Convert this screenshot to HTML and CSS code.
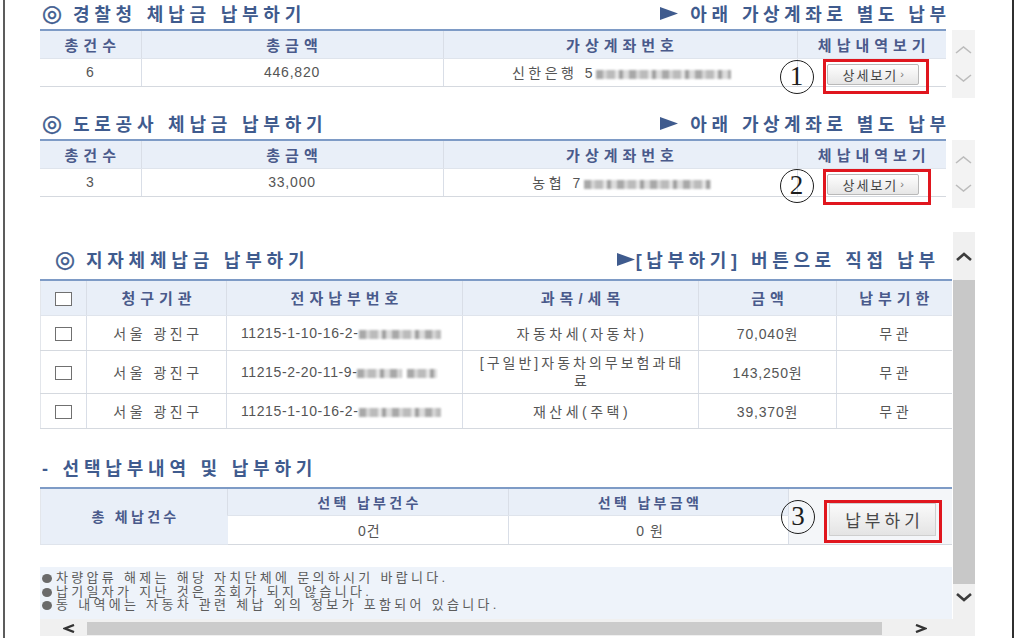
FILE: index.html
```html
<!DOCTYPE html>
<html lang="ko">
<head>
<meta charset="utf-8">
<title>체납금 납부하기</title>
<link rel="stylesheet" href="styles.css">
</head>
<body>
<div class="frame">

  <section class="sec">
    <div class="sec-head">
      <h2 class="title"><span class="bull">◎</span> 경찰청 체납금 납부하기</h2>
      <p class="lead"><svg class="tri" viewBox="0 0 18 13"><polygon points="0,0 18,6.5 0,13"/></svg>아래 가상계좌로 별도 납부</p>
    </div>
    <div class="sec-body">
      <table class="tbl">
        <colgroup><col class="w101"><col class="w302"><col class="w354"><col class="w149"></colgroup>
        <tr class="hrow"><th>총건수</th><th>총금액</th><th>가상계좌번호</th><th>체납내역보기</th></tr>
        <tr class="drow">
          <td class="nm">6</td>
          <td class="nm">446,820</td>
          <td class="kr">신한은행 5<span class="blur blur-a"></span></td>
          <td class="act"><span class="circ circ-a">1</span><button class="btn-detail">상세보기 <span class="gt">›</span></button><span class="mark mark-a"></span></td>
        </tr>
      </table>
      <div class="mini">
        <svg class="chev" viewBox="0 0 17 8"><polyline points="1,7 8.5,1 16,7"/></svg>
        <svg class="chev" viewBox="0 0 17 8"><polyline points="1,1 8.5,7 16,1"/></svg>
      </div>
    </div>
  </section>

  <section class="sec">
    <div class="sec-head">
      <h2 class="title"><span class="bull">◎</span> 도로공사 체납금 납부하기</h2>
      <p class="lead"><svg class="tri" viewBox="0 0 18 13"><polygon points="0,0 18,6.5 0,13"/></svg>아래 가상계좌로 별도 납부</p>
    </div>
    <div class="sec-body">
      <table class="tbl">
        <colgroup><col class="w101"><col class="w302"><col class="w354"><col class="w149"></colgroup>
        <tr class="hrow"><th>총건수</th><th>총금액</th><th>가상계좌번호</th><th>체납내역보기</th></tr>
        <tr class="drow">
          <td class="nm">3</td>
          <td class="nm">33,000</td>
          <td class="kr">농협 7<span class="blur blur-b"></span></td>
          <td class="act"><span class="circ circ-b">2</span><button class="btn-detail">상세보기 <span class="gt">›</span></button><span class="mark mark-b"></span></td>
        </tr>
      </table>
      <div class="mini">
        <svg class="chev" viewBox="0 0 17 8"><polyline points="1,7 8.5,1 16,7"/></svg>
        <svg class="chev" viewBox="0 0 17 8"><polyline points="1,1 8.5,7 16,1"/></svg>
      </div>
    </div>
  </section>

  <div class="box">
    <div class="pane">
      <div class="head3">
        <h2 class="title"><span class="bull">◎</span> 지자체체납금 납부하기</h2>
        <p class="lead lead3"><svg class="tri tri-tight" viewBox="0 0 18 13"><polygon points="0,0 18,6.5 0,13"/></svg>[납부하기] 버튼으로 직접 납부</p>
      </div>
      <table class="tbl3">
        <colgroup><col class="w46"><col class="w140"><col class="w236"><col class="w236"><col class="w138"><col class="w115"></colgroup>
        <tr class="h3"><th><span class="chk"></span></th><th>청구기관</th><th>전자납부번호</th><th>과목/세목</th><th>금액</th><th>납부기한</th></tr>
        <tr class="r3"><td><span class="chk"></span></td><td class="kr">서울 광진구</td><td class="pay-no">11215-1-10-16-2-<span class="blur blur-c"></span></td><td class="kr">자동차세(자동차)</td><td class="nm">70,040원</td><td class="kr">무관</td></tr>
        <tr class="r3 tall"><td><span class="chk"></span></td><td class="kr">서울 광진구</td><td class="pay-no">11215-2-20-11-9-<span class="blur blur-d"></span><span class="blur blur-e"></span></td><td class="kr two">[구일반]자동차의무보험과태<br>료</td><td class="nm">143,250원</td><td class="kr">무관</td></tr>
        <tr class="r3"><td><span class="chk"></span></td><td class="kr">서울 광진구</td><td class="pay-no">11215-1-10-16-2-<span class="blur blur-c"></span></td><td class="kr">재산세(주택)</td><td class="nm">39,370원</td><td class="kr">무관</td></tr>
      </table>

      <h3 class="sub">- 선택납부내역 및 납부하기</h3>
      <table class="tbl3 sum">
        <colgroup><col class="w187"><col class="w281"><col class="w280"><col class="w163"></colgroup>
        <tr class="sh"><th rowspan="2">총 체납건수</th><th>선택 납부건수</th><th>선택 납부금액</th><td rowspan="2" class="act3"><span class="circ circ-c">3</span><button class="btn-pay">납부하기</button><span class="mark mark-c"></span></td></tr>
        <tr class="sd"><td class="kr">0건</td><td class="kr">0 원</td></tr>
      </table>

      <div class="notes">
        <p><span class="dot"></span>차량압류 해제는 해당 자치단체에 문의하시기 바랍니다.</p>
        <p><span class="dot"></span>납기일자가 지난 것은 조회가 되지 않습니다.</p>
        <p><span class="dot"></span>동 내역에는 자동차 관련 체납 외의 정보가 포함되어 있습니다.</p>
      </div>
    </div>

    <div class="vbar">
      <div class="vup"><svg class="chev-d" viewBox="0 0 18 9"><polyline points="2,8 9,2 16,8"/></svg></div>
      <div class="vthumb"></div>
      <div class="vdown"><svg class="chev-d" viewBox="0 0 18 9"><polyline points="2,1 9,7 16,1"/></svg></div>
    </div>

    <div class="hbar">
      <svg class="hchev" viewBox="0 0 12 9"><polyline points="11,1 2,4.5 11,8"/></svg>
      <div class="hthumb"></div>
      <svg class="hchev hchev-r" viewBox="0 0 12 9"><polyline points="1,1 10,4.5 1,8"/></svg>
    </div>
    <div class="corner"></div>
  </div>

</div>
</body>
</html>
```

FILE: styles.css
```css
* { box-sizing: border-box; }
html, body { margin: 0; padding: 0; background: #fff; }
body {
  font-family: "Liberation Sans", "Noto Sans CJK KR", sans-serif;
  font-size: 14px;
  color: #555;
  overflow: hidden;
}
p, h2, h3 { margin: 0; }

.frame {
  margin-left: 3px;
  width: 1011px;
  height: 638px;
  border-left: 2px solid #5c5c5c;
  border-right: 2px solid #2f2f2f;
  padding: 1px 0 0 35px;
  overflow: hidden;
}

.sec { width: 935px; }
.sec + .sec { margin-top: 13px; }
.sec-head {
  display: flex;
  justify-content: space-between;
  align-items: center;
  width: 906px;
  height: 24px;
  margin-bottom: 4px;
}
.title {
  display: flex;
  align-items: center;
  padding-left: 2px;
  font-size: 18px;
  font-weight: 700;
  color: #3f5b8e;
  letter-spacing: 4.8px;
  white-space: pre;
}
.bull {
  font-family: "DejaVu Sans", "Noto Sans CJK KR", sans-serif;
  font-weight: 700;
  font-size: 23px;
  line-height: 20px;
  letter-spacing: 0;
  -webkit-text-stroke: 0.5px #3f5b8e;
  margin-right: 1px;
}
.lead {
  display: flex;
  align-items: center;
  margin-right: -4.5px;
  font-size: 18px;
  font-weight: 700;
  color: #3f5b8e;
  letter-spacing: 4.5px;
  white-space: nowrap;
}
.lead3 { letter-spacing: 4.6px; margin-right: -4.6px; }
.tri { width: 18px; height: 13px; fill: #3f5b8e; margin-right: 12px; flex: none; }
.tri-tight { margin-right: 1px; }

.sec-body { display: flex; gap: 6px; align-items: flex-start; }

table { border-collapse: collapse; table-layout: fixed; }
.w101 { width: 101px; } .w302 { width: 302px; } .w354 { width: 354px; } .w149 { width: 149px; }
.w46 { width: 46px; } .w140 { width: 140px; } .w236 { width: 236px; } .w138 { width: 138px; } .w115 { width: 115px; }
.w187 { width: 187px; } .w281 { width: 281px; } .w280 { width: 280px; } .w163 { width: 163px; }

th {
  background: #e9eff8;
  color: #4a5a8b;
  font-weight: 700;
  font-size: 15px;
  letter-spacing: 5px;
  padding: 0 0 0 5px;
  text-align: center;
  border-left: 1px solid #d9dee7;
  border-bottom: 1px solid #dfe4ec;
}
td {
  padding: 0;
  text-align: center;
  vertical-align: middle;
  border-left: 1px solid #d9dee7;
  border-bottom: 1px solid #d5d9df;
  font-size: 14px;
  color: #555;
}
th:first-child, td:first-child { border-left: none; }
.kr { letter-spacing: 3.5px; padding-left: 3px; }
.nm { letter-spacing: 0.8px; }

.tbl { width: 906px; border-top: 2px solid #7e9bc6; }
.hrow { height: 28px; }
.drow { height: 28px; }

.act { position: relative; }
.act3 { position: relative; background: #f4f6f9; text-align: left; padding: 7px 0 0 40px; }

.btn-detail {
  display: inline-flex;
  align-items: center;
  justify-content: center;
  width: 92px;
  height: 21px;
  margin: 4px 0 0 3px;
  padding: 0 0 0 2px;
  border: 1px solid #b9b9b9;
  border-radius: 2px;
  background: linear-gradient(#fefefe, #e6e6e6);
  font-family: "Liberation Sans", "Noto Sans CJK KR", sans-serif;
  font-size: 13px;
  color: #444;
  letter-spacing: 2px;
}
.gt { font-size: 11px; color: #777; margin-left: 2px; }

.btn-pay {
  display: inline-flex;
  align-items: center;
  justify-content: center;
  width: 107px;
  height: 33px;
  padding: 0 0 0 4px;
  border: 1px solid #cfcfcf;
  background: linear-gradient(#fafafa, #e4e4e4);
  font-family: "Liberation Sans", "Noto Sans CJK KR", sans-serif;
  font-size: 17px;
  color: #474747;
  letter-spacing: 4px;
}

.circ {
  position: absolute;
  width: 34px;
  height: 34px;
  border: 1.6px solid #1e1e1e;
  border-radius: 50%;
  font: 400 27px/31px "Liberation Serif", serif;
  color: #1e1e1e;
  text-align: center;
  letter-spacing: 0;
}
.circ-a { left: -18px; top: 1px; }
.circ-b { left: -18px; top: 0; }
.circ-c { left: -8px; top: 11px; }

.mark { position: absolute; border: 3px solid #e0161e; }
.mark-a { left: 25px; top: 0; width: 106px; height: 35px; }
.mark-b { left: 25px; top: 0; width: 108px; height: 36px; }
.mark-c { left: 35px; top: 11px; width: 118px; height: 43px; }

.blur {
  display: inline-block;
  height: 9px;
  vertical-align: -1px;
  background: repeating-linear-gradient(90deg, #9a9a9a 0 7px, #cfcfcf 7px 11px, #b0b0b0 11px 19px, #e2e2e2 19px 23px, #8f8f8f 23px 27px, #d6d6d6 27px 33px);
  filter: blur(1.2px);
  opacity: 0.85;
}
.blur-a { width: 135px; }
.blur-b { width: 127px; }
.blur-c { width: 82px; }
.blur-d { width: 45px; margin-right: 5px; }
.blur-e { width: 30px; }

.mini {
  width: 23px;
  height: 68px;
  margin-top: 1px;
  background: #f3f3f3;
  display: flex;
  flex-direction: column;
  align-items: center;
  padding-top: 16px;
  gap: 20px;
}
.chev { width: 17px; height: 8px; fill: none; stroke: #bcbcbc; stroke-width: 1.6; }

.box {
  margin-top: 24px;
  display: grid;
  grid-template-columns: 913px 22px;
  grid-template-rows: 387px 17px;
  width: 935px;
}
.pane { overflow: hidden; padding-top: 15px; }
.head3 {
  display: flex;
  justify-content: space-between;
  align-items: center;
  width: 911px;
  height: 24px;
  padding: 0 16px 0 13px;
  margin-bottom: 8px;
}

.tbl3 { width: 911px; border-top: 2px solid #7e9bc6; border-left: 1px solid #e3e6eb; }
.h3 { height: 35px; }
.r3 { height: 35px; }
.r3.tall { height: 43px; }
.chk {
  display: inline-block;
  width: 17px;
  height: 14px;
  border: 1px solid #707070;
  background: #fff;
  vertical-align: middle;
}
th .chk { margin-left: -5px; }
.pay-no { text-align: left; padding-left: 14px; letter-spacing: 0.6px; }
.two { line-height: 18px; letter-spacing: 3px; }

.sub {
  display: flex;
  align-items: center;
  height: 24px;
  margin: 26px 0 8px;
  padding-left: 2px;
  font-size: 18px;
  font-weight: 700;
  color: #3f5b8e;
  letter-spacing: 4.8px;
}
.sh { height: 28px; }
.sd { height: 29px; }
.sum th { font-size: 14px; letter-spacing: 3.3px; padding-left: 3px; }
.sum td.kr { letter-spacing: 1px; }

.notes {
  margin-top: 22px;
  width: 912px;
  height: 55px;
  background: #eef3fa;
  padding: 4px 0 0 2px;
  font-size: 13px;
  line-height: 13.5px;
  letter-spacing: 3.3px;
  color: #5c5c5c;
}
.dot {
  display: inline-block;
  width: 10px;
  height: 9px;
  border-radius: 50%;
  background: #6a6a6a;
  margin-right: 4px;
  vertical-align: -1px;
}

.vbar { background: #f0f0f0; display: flex; flex-direction: column; }
.vup { height: 48px; display: flex; align-items: center; justify-content: center; }
.vthumb { height: 304px; background: #c8c8c8; }
.vdown { flex: 1; display: flex; justify-content: center; padding-top: 9px; }
.chev-d { width: 18px; height: 9px; fill: none; stroke: #3c3c3c; stroke-width: 2.6; }

.hbar {
  background: #f0f0f0;
  display: flex;
  align-items: center;
  padding-left: 23px;
}
.hchev { width: 12px; height: 9px; fill: none; stroke: #333; stroke-width: 2.4; flex: none; margin-top: 2px; }
.hthumb { width: 795px; height: 13px; background: #cbcbcb; margin-left: 12px; margin-top: 2px; }
.hchev-r { margin-left: 33px; }
.corner { background: #f0f0f0; }
```
